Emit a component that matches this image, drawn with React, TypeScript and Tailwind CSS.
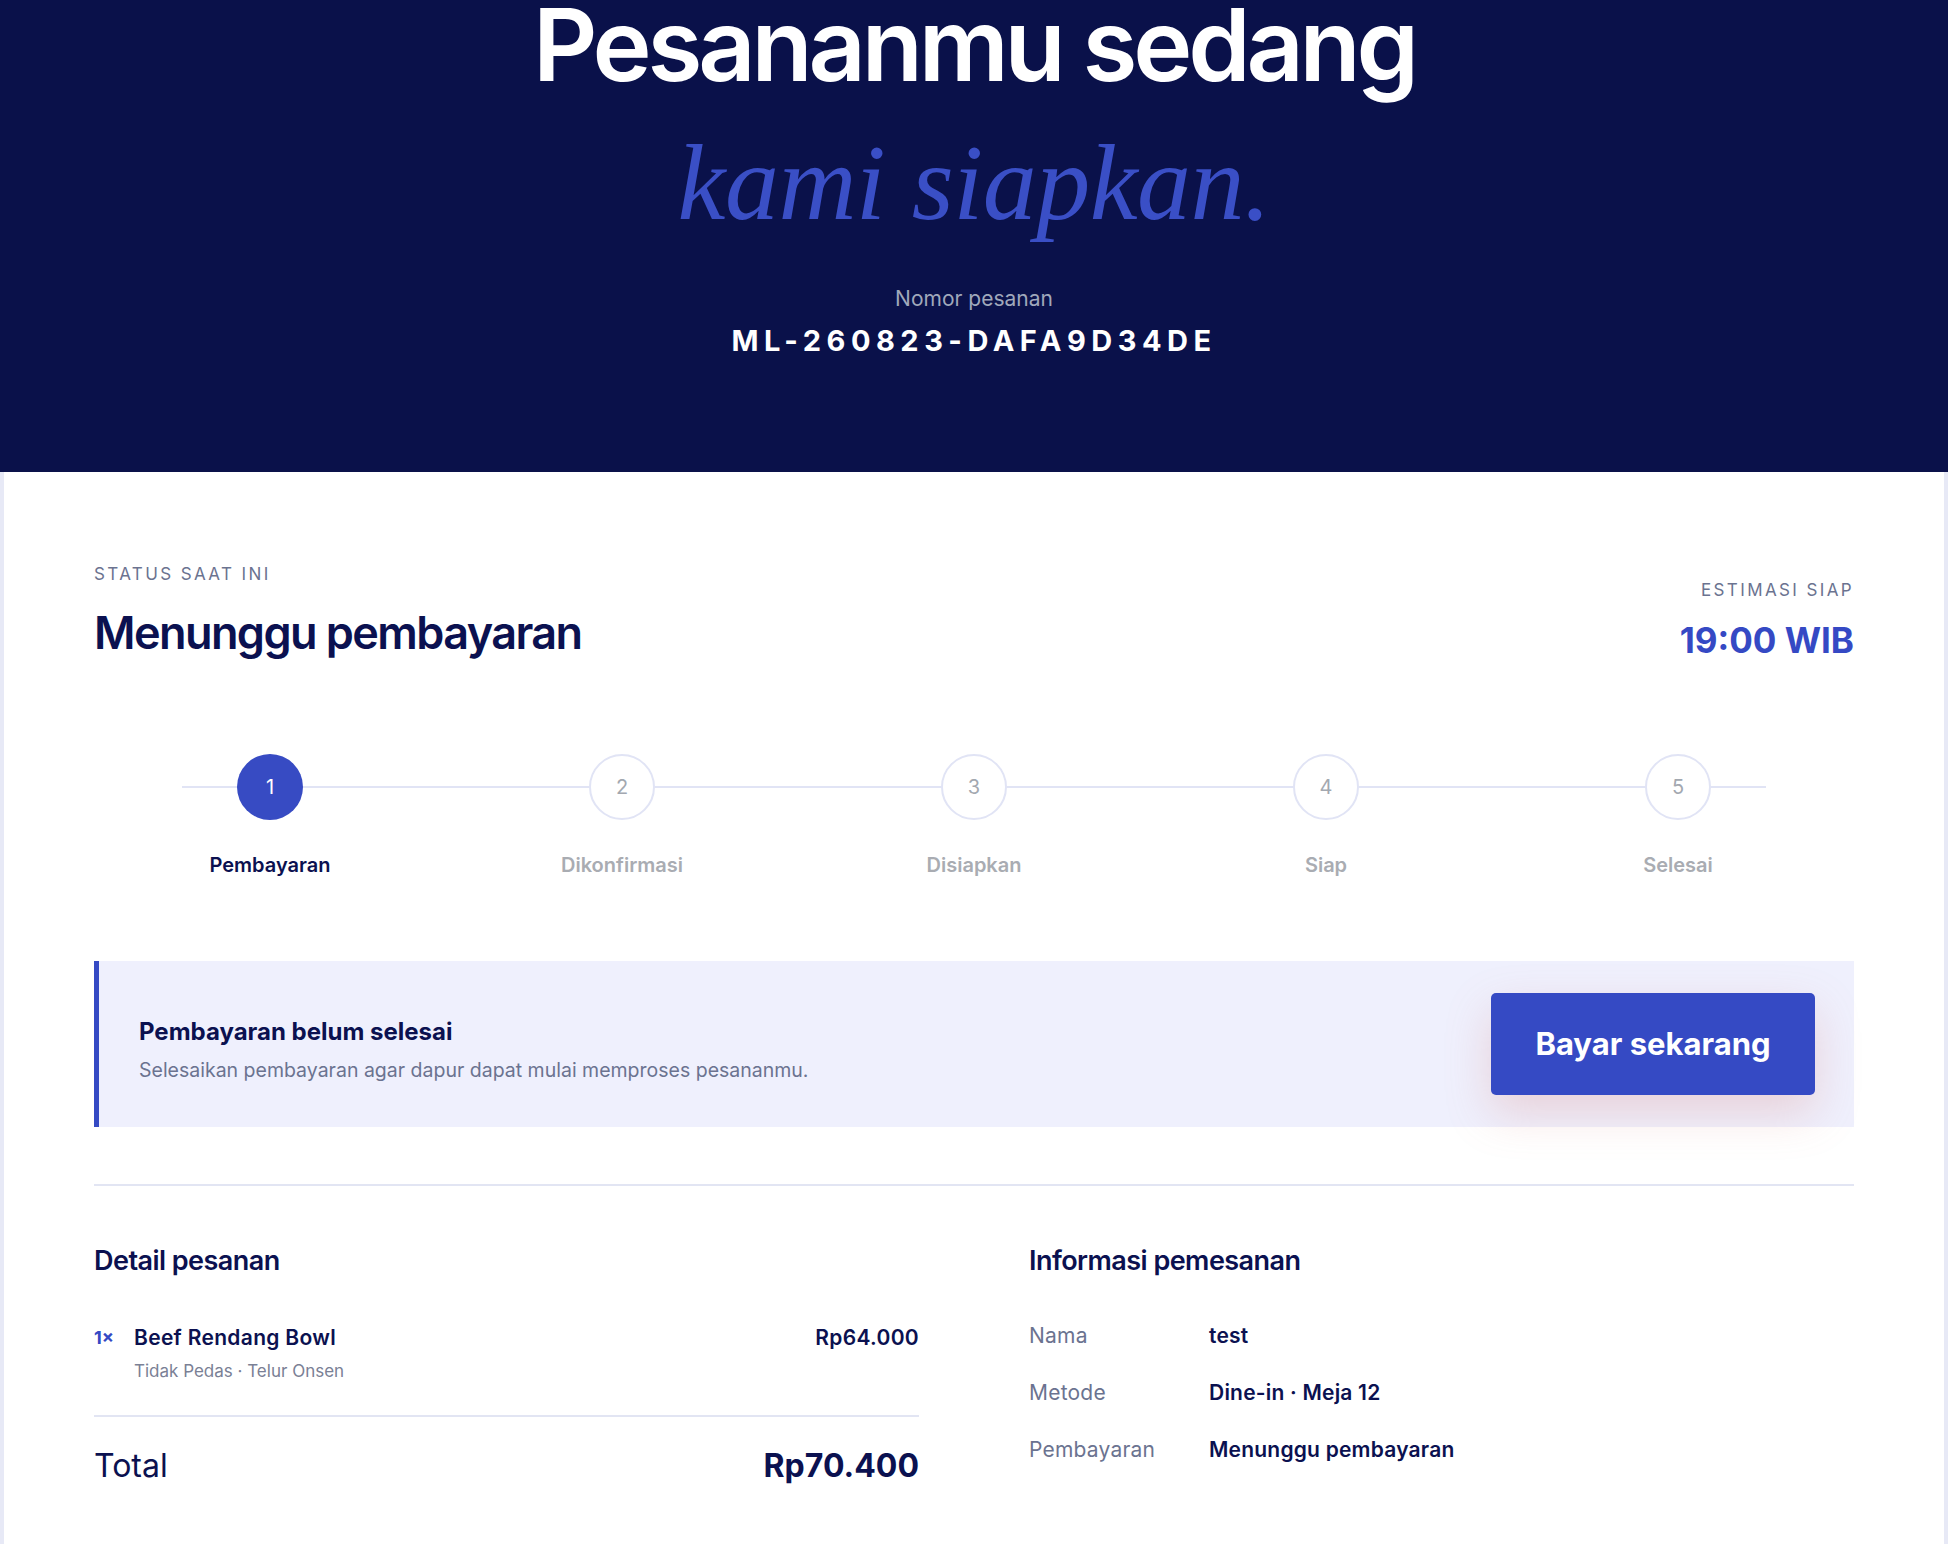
import React from "react";

const steps = ["Pembayaran", "Dikonfirmasi", "Disiapkan", "Siap", "Selesai"];

export default function App() {
  return (
    <div className="min-h-screen bg-[#e7e9f6] font-['Inter',sans-serif] text-[#0b1150]">
      {/* Header */}
      <header className="bg-[#0a114a] flex flex-col items-center text-center pb-[113px]">
        <h1 className="-mt-[10px] flex flex-col items-center">
          <span className="block text-[100px] leading-[110px] font-semibold tracking-[-0.042em] text-white">
            Pesananmu sedang
          </span>
          <span className="block mt-[24px] font-['Liberation_Serif',serif] italic text-[108px] leading-[117px] tracking-[-0.005em] text-[#3a4fc6]">
            kami siapkan.
          </span>
        </h1>
        <p className="mt-[44px] text-[21px] leading-[28px] text-[#a0a8bb]">Nomor pesanan</p>
        <p className="mt-[10px] text-[29px] leading-[36px] font-bold tracking-[0.19em] text-white">
          ML-260823-DAFA9D34DE
        </p>
      </header>

      {/* Card */}
      <main className="bg-white mx-[4px] px-[90px] pt-[90px] pb-[90px]">
        <div className="flex justify-between items-end">
          <div>
            <p className="text-[17px] leading-[24px] tracking-[0.14em] text-[#6b7390] uppercase">
              Status saat ini
            </p>
            <h2 className="mt-[20px] text-[45px] leading-[54px] font-semibold tracking-[-0.035em] text-[#0b1150]">
              Menunggu pembayaran
            </h2>
          </div>
          <div className="text-right">
            <p className="text-[17px] leading-[24px] tracking-[0.14em] text-[#6b7390] uppercase">
              Estimasi siap
            </p>
            <p className="mt-[18px] text-[35px] leading-[40px] font-bold text-[#3549c4]">19:00 WIB</p>
          </div>
        </div>

        {/* Stepper */}
        <div className="relative mt-[94px] grid grid-cols-5">
          <div className="absolute top-[32px] left-[5%] right-[5%] h-[2px] bg-[#e1e4f5]" />
          {steps.map((s, i) => (
            <div key={s} className="relative flex flex-col items-center">
              {i === 0 ? (
                <div className="w-[66px] h-[66px] rounded-full bg-[#374bc3] flex items-center justify-center text-[20px] text-white">
                  {i + 1}
                </div>
              ) : (
                <div className="w-[66px] h-[66px] rounded-full bg-white border-2 border-[#e1e4f5] flex items-center justify-center text-[20px] text-[#a3a8b0]">
                  {i + 1}
                </div>
              )}
              <p
                className={
                  i === 0
                    ? "mt-[31px] text-[20px] leading-[28px] font-semibold text-[#0b1150]"
                    : "mt-[31px] text-[20px] leading-[28px] font-semibold text-[#a9acb2]"
                }
              >
                {s}
              </p>
            </div>
          ))}
        </div>

        {/* Alert */}
        <div className="mt-[82px] flex items-center justify-between bg-[#eff0fd] border-l-[5px] border-[#354ac4] pl-[40px] pr-[39px] py-[32px]">
          <div className="pt-[12px]">
            <p className="text-[24px] leading-[30px] font-bold text-[#0b1150]">Pembayaran belum selesai</p>
            <p className="mt-[9px] text-[19.5px] leading-[28px] text-[#6b7390]">
              Selesaikan pembayaran agar dapur dapat mulai memproses pesananmu.
            </p>
          </div>
          <button className="h-[102px] w-[324px] rounded-[5px] bg-[#354ac4] text-white text-[31px] font-bold shadow-[0_18px_45px_rgba(214,120,110,0.25)]">
            Bayar sekarang
          </button>
        </div>

        <div className="mt-[57px] h-[2px] bg-[#e2e5f3]" />

        {/* Details */}
        <div className="mt-[59px] grid grid-cols-2 gap-x-[110px]">
          <div>
            <h3 className="text-[27px] leading-[32px] font-semibold tracking-[-0.02em] text-[#0b1150]">
              Detail pesanan
            </h3>
            <div className="mt-[47px] pb-[33px] border-b-2 border-[#e2e5f3]">
              <div className="flex justify-between">
                <div className="flex">
                  <span className="w-[40px] text-[18px] leading-[28px] font-bold text-[#3549c4]">1×</span>
                  <span className="text-[21px] leading-[28px] font-semibold tracking-[0.015em] text-[#0b1150]">
                    Beef Rendang Bowl
                  </span>
                </div>
                <span className="text-[21px] leading-[28px] font-semibold tracking-[0.015em] text-[#0b1150]">
                  Rp64.000
                </span>
              </div>
              <p className="mt-[8px] pl-[40px] text-[17px] leading-[22px] text-[#7a8095]">
                Tidak Pedas · Telur Onsen
              </p>
            </div>
            <div className="pt-[29px] flex justify-between items-center">
              <span className="text-[32px] leading-[40px] text-[#0b1150]">Total</span>
              <span className="text-[32px] leading-[40px] font-bold text-[#0b1150]">Rp70.400</span>
            </div>
          </div>

          <div>
            <h3 className="text-[27px] leading-[32px] font-semibold tracking-[-0.02em] text-[#0b1150]">
              Informasi pemesanan
            </h3>
            <div className="mt-[45px] flex flex-col gap-[29px]">
              {[
                ["Nama", "test"],
                ["Metode", "Dine-in · Meja 12"],
                ["Pembayaran", "Menunggu pembayaran"],
              ].map(([k, v]) => (
                <div key={k} className="flex text-[21px] leading-[28px] tracking-[0.01em]">
                  <span className="w-[180px] text-[#6b7390]">{k}</span>
                  <span className="font-semibold text-[#0b1150]">{v}</span>
                </div>
              ))}
            </div>
          </div>
        </div>
      </main>
    </div>
  );
}
